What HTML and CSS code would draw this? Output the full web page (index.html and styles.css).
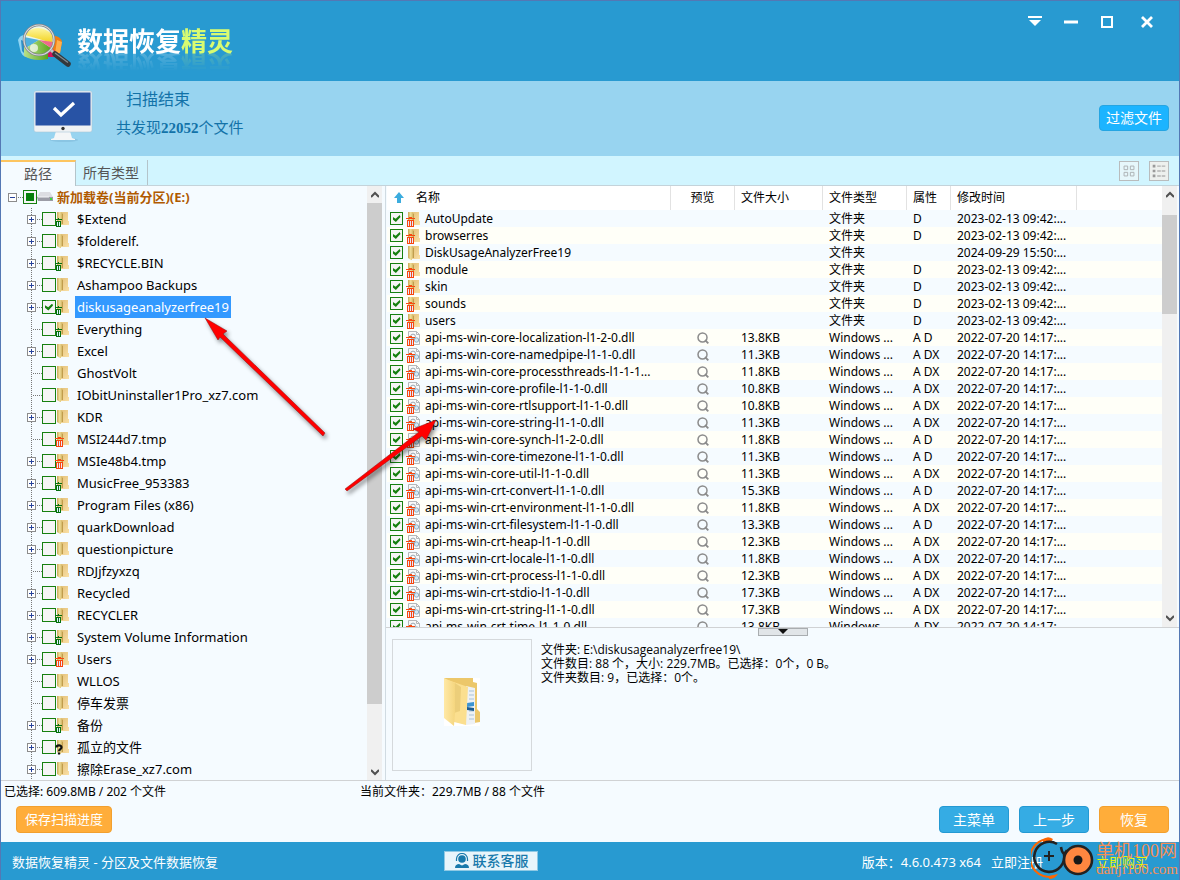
FILE: index.html
```html
<!DOCTYPE html>
<html lang="zh-CN">
<head>
<meta charset="utf-8">
<title>数据恢复精灵</title>
<link rel="stylesheet" href="styles.css">
</head>
<body>
<svg class="sprite" aria-hidden="true">
  <defs>
    <linearGradient id="gold" x1="0" x2="1" y1="0" y2="0"><stop offset="0" stop-color="#c9a85a"/><stop offset=".45" stop-color="#f1df98"/><stop offset="1" stop-color="#c4a14f"/></linearGradient>
    <linearGradient id="gold2" x1="0" x2="1" y1="0" y2="1"><stop offset="0" stop-color="#e3c078"/><stop offset="1" stop-color="#fae0a6"/></linearGradient>
  </defs>
  <symbol id="folder" viewBox="0 0 14 16">
    <path d="M4 1h8v9h1v4H4z" fill="url(#gold2)"/>
    <path d="M1 1h4l2 2v10H5v2H4l-3-2z" fill="url(#gold)"/>
    <path d="M6.500 3v10" stroke="#c09d4c" stroke-width="1"/>
  </symbol>
  <symbol id="dll" viewBox="0 0 14 16">
    <path d="M1.500 1.500h8l3 3v10h-11z" fill="#f8f9fa" stroke="#b4b7ba"/>
    <path d="M9.500 1.500v3h3" fill="none" stroke="#b4b7ba"/>
    <circle cx="6" cy="6.500" r="2.400" fill="none" stroke="#9aa7b1" stroke-width="1"/>
    <circle cx="9.500" cy="10" r="2.200" fill="#d5e8f4" stroke="#8fb0c5" stroke-width="1"/>
  </symbol>
  <symbol id="trash" viewBox="0 0 10 12">
    <g shape-rendering="crispEdges">
      <path d="M3 2h3v1h3v1H0V3h3zM1 5h7v7H1z" fill="currentColor"/>
      <path d="M2 6h1v5H2zM4 6h1v5H4zM6 6h1v5H6z" fill="#e4e8ff"/>
    </g>
  </symbol>
  <symbol id="trash-small" viewBox="0 0 10 12">
    <g shape-rendering="crispEdges">
      <path d="M3 3h1v1h3v1H0V4h3zM1 6h5v6H1z" fill="currentColor"/>
      <path d="M2 7h1v4H2zM4 7h1v4H4z" fill="#dcf4ff"/>
    </g>
  </symbol>
  <symbol id="question" viewBox="0 0 10 12">
    <path d="M1.500 4.500C1.500 1.800 6.500 1.800 6.500 4.300C6.500 6.200 4 6 4 8.300M4 9.500v2" fill="none" stroke="#111" stroke-width="2.200"/>
  </symbol>
  <symbol id="lens" viewBox="0 0 12 12">
    <circle cx="5.500" cy="5.500" r="4.500" fill="none" stroke="#8b8b8b" stroke-width="1.500"/>
    <path d="M8 8l3.300 3.300" stroke="#8b8b8b" stroke-width="1.800"/>
  </symbol>
</svg>

<div class="window">
  <header class="titlebar">
    <svg class="logo" viewBox="0 0 56 46" aria-hidden="true">
      <defs>
        <linearGradient id="gy" x1="0" x2="0" y1="0" y2="1"><stop offset="0" stop-color="#fdf6a0"/><stop offset="1" stop-color="#f2d21b"/></linearGradient>
        <linearGradient id="gg" x1="0" x2="1"><stop offset="0" stop-color="#b9e08a"/><stop offset="1" stop-color="#58a51b"/></linearGradient>
      </defs>
      <path d="M1 17Q3 11 12 12L10 34Q4 33 3 26Z" fill="#8fd4f2"/>
      <path d="M4 17l5 2v13l-4-4z" fill="#2d8fc6"/>
      <path d="M30 12Q44 12 45 19L43 30L30 33Z" fill="#f07d13"/>
      <path d="M40 17l5 2-2 11-5 1z" fill="#ffb04b"/>
      <path d="M28 21L41 30L39 34H30Z" fill="#d4145a"/>
      <path d="M7 21Q16 29 31 24V36Q17 39 7 33Z" fill="url(#gg)"/>
      <circle cx="22" cy="17" r="15" fill="#edf6e6"/>
      <path d="M9 10Q22-1 36 12L35 20L22 16L8 12Z" fill="url(#gy)"/>
      <path d="M7 14L22 17L9 25Z" fill="#4eb0de"/>
      <path d="M9 25L22 17L34 25Q28 33 20 32Q12 31 9 25Z" fill="url(#gg)"/>
      <path d="M22 17L36 19L34 25Z" fill="#ee6a8b"/>
      <circle cx="17" cy="25" r="4" fill="#fff" opacity=".7"/>
      <circle cx="22" cy="17" r="15" fill="none" stroke="#7d8288" stroke-width="2.600"/>
      <circle cx="22" cy="17" r="15" fill="none" stroke="#d9dcde" stroke-width="1.200"/>
      <path d="M34 27L38 31" stroke="#bfc3c6" stroke-width="3"/>
      <path d="M38 31L51 41" stroke="#33383c" stroke-width="5.500" stroke-linecap="round"/>
      <path d="M38 30L51 39.500" stroke="#858b90" stroke-width="1.200"/>
    </svg>
    <h1 class="brand">数据恢复<span class="brand-accent">精灵</span></h1>
    <div class="window-buttons">
      <button class="win-btn" aria-label="菜单"><svg viewBox="0 0 16 16"><path d="M1 3h14" stroke="#fff" stroke-width="2"/><path d="M2 6h12l-6 6z" fill="#fff"/></svg></button>
      <button class="win-btn" aria-label="最小化"><svg viewBox="0 0 16 16"><path d="M1 8h14" stroke="#fff" stroke-width="3"/></svg></button>
      <button class="win-btn" aria-label="最大化"><svg viewBox="0 0 16 16"><path d="M3 3h10v10H3z" fill="none" stroke="#fff" stroke-width="2"/></svg></button>
      <button class="win-btn" aria-label="关闭"><svg viewBox="0 0 16 16"><path d="M3 3l10 10M13 3L3 13" stroke="#fff" stroke-width="2.800"/></svg></button>
    </div>
  </header>

  <section class="status">
    <svg class="monitor" viewBox="0 0 60 54" aria-hidden="true">
      <ellipse cx="31" cy="50" rx="14" ry="2" fill="#6fa9cb" opacity=".35"/>
      <path d="M23 41h14l2 7 3 1v1H18v-1l3-1z" fill="#f4f6f7"/>
      <rect x="1" y="1" width="58" height="41" rx="2" fill="#f0f2f4" stroke="#a9c6d8" stroke-width=".6"/>
      <rect x="2.500" y="2.500" width="55" height="33" fill="#2853a5"/>
      <circle cx="30" cy="38.500" r="1.700" fill="#333"/>
      <path d="M21 18l7 7 13-12" fill="none" stroke="#fff" stroke-width="3.200"/>
    </svg>
    <div class="status-text">
      <p class="status-title">扫描结束</p>
      <p class="status-detail">共发现<b>22052</b>个文件</p>
    </div>
    <button class="btn btn-filter">过滤文件</button>
  </section>

  <nav class="tabs">
    <button class="tab tab-active">路径</button>
    <button class="tab">所有类型</button>
    <div class="views">
      <button class="view-btn" aria-label="图标视图"><svg viewBox="0 0 20 20"><path d="M4.500 4.500h4v4h-4zM11.500 4.500h4v4h-4zM4.500 11.500h4v4h-4zM11.500 11.500h4v4h-4z" fill="none" stroke="#a9aeb0"/></svg></button>
      <button class="view-btn view-on" aria-label="列表视图"><svg viewBox="0 0 20 20"><path d="M3 3h3v3H3zM3 8.500h3v3H3zM3 14h3v3H3z" fill="#9a9a9a"/><path d="M8 4.500h9M8 10h9M8 15.500h9" stroke="#b2b2b2" stroke-width="1.500" stroke-dasharray="4 1"/></svg></button>
    </div>
  </nav>

  <main class="main">
    <aside class="tree-pane">
      <div class="tree">
        <div class="tree-root">
          <button class="toggle toggle-open" aria-label="折叠"></button>
          <span class="dots"></span>
          <input type="checkbox" class="check check-partial" id="root">
          <svg class="drive" viewBox="0 0 16 12" aria-hidden="true"><path d="M3 1h10l3 5H0z" fill="#dcdde2"/><path d="M0 6h16v4H1z" fill="#9b9ca6"/><path d="M1 6h11" stroke="#f5f5f8"/><path d="M13 7h2v2h-2z" fill="#3ddc3d"/></svg>
          <label for="root">新加载卷(当前分区)(E:)</label>
        </div>
        <ul class="tree-list" id="tree"></ul>
      </div>
      <div class="scroll">
        <button class="scroll-btn" aria-label="向上滚动"><svg viewBox="0 0 8 8"><path d="M0 6l4-4 4 4" fill="none" stroke="#505050" stroke-width="2"/></svg></button>
        <div class="thumb thumb-tree"></div>
        <div class="scroll-space"></div>
        <button class="scroll-btn" aria-label="向下滚动"><svg viewBox="0 0 8 8"><path d="M0 2l4 4 4-4" fill="none" stroke="#505050" stroke-width="2"/></svg></button>
      </div>
    </aside>

    <section class="content">
      <div class="list-pane">
        <div class="list">
          <table class="files">
            <colgroup><col class="c-name"><col class="c-view"><col class="c-size"><col class="c-type"><col class="c-attr"><col class="c-date"><col></colgroup>
            <thead>
              <tr>
                <th class="th-name"><svg class="sort" viewBox="0 0 12 12" aria-hidden="true"><path d="M6 0l5 6H8v5H4V6H1z" fill="#3cacde"/></svg>名称</th>
                <th class="th-view">预览</th><th>文件大小</th><th>文件类型</th><th>属性</th><th>修改时间</th><th></th>
              </tr>
            </thead>
            <tbody id="files"></tbody>
          </table>
        </div>
        <div class="scroll">
          <button class="scroll-btn" aria-label="向上滚动"><svg viewBox="0 0 8 8"><path d="M0 6l4-4 4 4" fill="none" stroke="#505050" stroke-width="2"/></svg></button>
          <div class="scroll-lead"></div>
          <div class="thumb thumb-list"></div>
          <div class="scroll-space"></div>
          <button class="scroll-btn" aria-label="向下滚动"><svg viewBox="0 0 8 8"><path d="M0 2l4 4 4-4" fill="none" stroke="#505050" stroke-width="2"/></svg></button>
        </div>
      </div>
      <button class="splitter" aria-label="收起预览"><svg viewBox="0 0 10 5"><path d="M0 0h10L5 5z" fill="#111"/></svg></button>
      <div class="preview">
        <div class="thumbnail">
          <svg class="big-folder" viewBox="0 0 36 48" aria-hidden="true">
            <defs><linearGradient id="bf" x1="0" x2="1"><stop offset="0" stop-color="#ffe9a6"/><stop offset="1" stop-color="#f5d67f"/></linearGradient></defs>
            <path d="M0 0h36v48H0z" fill="#fff"/>
            <path d="M0 0h29v4l4 1v26l3 3v10l-6 1z" fill="#ecc76a"/>
            <path d="M22 8l9 2v36l-9 1z" fill="#eef1f4"/>
            <path d="M25 13h5M25 17h5M25 21h5M25 33h5M25 37h5M25 41h5" stroke="#a9c3d8"/>
            <path d="M23 25l7-1v4l-7 1z" fill="#3d94d1"/><path d="M23 29l7 1v3l-7-1z" fill="#1c5c91"/>
            <path d="M4 2l20 7-2 38-12-3z" fill="#fbdf8f"/>
            <path d="M11 5l6 4-1 24-6 2z" fill="#ecce7a"/>
            <path d="M0 0l11 5v29l-1 14L0 40z" fill="url(#bf)"/>
          </svg>
        </div>
        <div class="preview-text">
          <p>文件夹: E:\diskusageanalyzerfree19\</p>
          <p>文件数目: 88 个，大小: 229.7MB。已选择：0个，0 B。</p>
          <p>文件夹数目: 9，已选择：0个。</p>
        </div>
      </div>
    </section>

    <svg class="pointers" viewBox="0 0 240 190" aria-hidden="true">
      <g fill="#f00" stroke="#8a1010" stroke-width=".5">
        <path d="M4 8L26 21L22 24L124 123L122 126L19 27L17 30Z"/>
        <path d="M235 110L225 130L221 126L146 181L144 179L218 122L212 119Z"/>
      </g>
    </svg>
  </main>

  <section class="actions">
    <div class="summary"><span class="summary-left">已选择: 609.8MB / 202 个文件</span><span>当前文件夹：229.7MB / 88 个文件</span></div>
    <div class="buttons">
      <button class="btn btn-save">保存扫描进度</button>
      <span class="spacer"></span>
      <button class="btn btn-blue">主菜单</button>
      <button class="btn btn-blue">上一步</button>
      <button class="btn btn-orange">恢复</button>
    </div>
  </section>

  <footer class="footer">
    <span class="product">数据恢复精灵 - 分区及文件数据恢复</span>
    <button class="service"><svg viewBox="0 0 16 16" aria-hidden="true"><path d="M2.500 8V6a5.500 5.500 0 0 1 11 0v2" fill="none" stroke="#1879ab" stroke-width="1.200"/><circle cx="8" cy="6" r="3.800" fill="#1879ab"/><path d="M1 15c0-3 2-4 4-4l3 1.500L11 11c2 0 4 1 4 4z" fill="#1879ab"/></svg>联系客服</button>
    <div class="footer-right">
      <span>版本：4.6.0.473 x64</span>
      <a class="register" href="#register">立即注册</a>
      <a class="buy" href="#buy">立即购买</a>
    </div>
    <div class="mark">
      <svg viewBox="0 0 64 44" aria-hidden="true">
        <path d="M20 3A19 19 0 1 0 24 40" fill="none" stroke="#f60" stroke-width="2"/>
        <path d="M12 4Q16-1 22 3L20 6H12zM18 40l9-2Q24 43 18 43z" fill="#f60"/>
        <path d="M26 8A15 15 0 1 0 33 18" fill="none" stroke="#222" stroke-width="2.600"/>
        <path d="M18 15v10M13 20h10" stroke="#222" stroke-width="2"/>
        <path d="M30 11Q32 22 36 14" fill="none" stroke="#222" stroke-width="2.600"/>
        <circle cx="47" cy="24" r="14" fill="#ff8740" stroke="#222" stroke-width="2.600"/>
        <circle cx="47" cy="24" r="4.500" fill="#181818"/>
      </svg>
      <div class="mark-text"><span class="mark-name">单机100网</span><span class="mark-site">danji100.com</span></div>
    </div>
  </footer>
</div>
<script src="app.js"></script>
</body>
</html>
```
FILE: styles.css
```css
* { box-sizing: border-box; }
body { margin: 0; font-family: "Noto Sans", "Noto Sans CJK SC", sans-serif; font-size: 13px; color: #000; }
button { font: inherit; padding: 0; margin: 0; border: 0; background: none; color: inherit; cursor: pointer; }
p, h1, ul { margin: 0; padding: 0; }
svg { display: block; }
.sprite { position: absolute; width: 0; height: 0; }

.window { display: flex; flex-direction: column; height: 100vh; min-height: 560px; border: 1px solid #5478b4; border-bottom-width: 0; background: #f5fbff; overflow: hidden; }

.titlebar { display: flex; align-items: flex-start; flex: none; height: 80px; padding: 22px 24px 0 16px; background: #289ad1; }
.logo { width: 56px; height: 46px; margin-right: 4px; }
.brand { font-family: "Noto Sans CJK SC", sans-serif; font-size: 26px; line-height: 34px; font-weight: 700; color: #fff; -webkit-box-reflect: below -8px linear-gradient(transparent 35%, rgba(255, 255, 255, .25)); }
.brand-accent { color: #d8fb71; }
.window-buttons { display: flex; gap: 20px; margin-left: auto; margin-top: -9px; }
.win-btn svg { width: 16px; height: 16px; }
.win-btn:last-child { margin-left: 4px; }

.status { display: flex; align-items: flex-start; flex: none; height: 75px; padding: 9px 10px 0 32px; background: #98d4f0; }
.monitor { width: 60px; height: 54px; }
.status-text { margin-left: 23px; color: #1272a8; font-family: "Liberation Serif", "Noto Sans CJK SC", serif; }
.status-title { padding-left: 10px; font-size: 16px; line-height: 20px; }
.status-detail { margin-top: 8px; font-size: 15px; line-height: 20px; }
.btn { border: 1px solid; border-radius: 4px; color: #fff; text-align: center; }
.btn-filter { width: 70px; height: 26px; margin: 15px 0 0 auto; background: #1cb4ff; border-color: #25a5e2; font-size: 14px; line-height: 24px; }

.tabs { display: flex; align-items: flex-end; flex: none; height: 30px; padding-right: 10px; background: #d1f5ff; border-bottom: 1px solid #c4d3da; }
.tab { height: 25px; padding: 0 8px 0 7px; border-right: 1px solid #b4c4ca; font-size: 14px; line-height: 26px; color: #555; }
.tab-active { height: 26px; width: 75px; padding: 0; margin-bottom: -1px; background: #f5fbff; border-top: 2px solid #fdc560; line-height: 24px; }
.views { display: flex; gap: 10px; margin-left: auto; padding-bottom: 4px; }
.view-btn { width: 20px; height: 20px; border: 1px solid #b9bcbd; background: #e6f7fb; }
.view-on { background: #edf0ee; }

.main { position: relative; display: grid; grid-template-columns: 385px minmax(0, 1fr); flex: 1; min-height: 0; border-bottom: 1px solid #d0d2d4; }
.tree-pane { display: flex; min-height: 0; padding-right: 3px; border-right: 1px solid #d0dbe2; }
.tree { flex: 1; min-width: 0; overflow: hidden; }
.tree-root { display: flex; align-items: center; height: 22px; padding-left: 7px; font-weight: 700; color: #b05a00; line-height: 20px; white-space: nowrap; }
.tree-list { list-style: none; }
.node { display: flex; align-items: center; height: 22px; padding-left: 26px; white-space: nowrap; background: repeating-linear-gradient(#777 0 1px, transparent 1px 2px) 30px 0 / 1px 22px no-repeat; }
.toggle { flex: none; width: 9px; height: 9px; border: 1px solid #8c8c8c; background: linear-gradient(#27439b, #27439b) center / 5px 1px no-repeat, linear-gradient(#27439b, #27439b) center / 1px 5px no-repeat, #fff; }
.toggle-open { background: linear-gradient(#27439b, #27439b) center / 5px 1px no-repeat, #fff; }
.no-toggle { flex: none; width: 9px; }
.dots { flex: none; width: 6px; height: 1px; background: repeating-linear-gradient(90deg, transparent 0 1px, #777 1px 2px); }
.no-toggle + .dots { width: 10px; margin-left: -4px; }
.check { appearance: none; display: grid; place-items: center; flex: none; width: 14px; height: 14px; margin: 0; border: 1px solid #16800f; background: #f5f5f5; }
.check:checked::before { content: ""; width: 8px; height: 7px; background: #16800f; clip-path: polygon(0 25%, 40% 55%, 90% 0, 100% 30%, 42% 100%, 0 60%); }
.check-partial::before { content: ""; width: 8px; height: 8px; background: #07800a; }
.drive { width: 16px; height: 12px; margin-right: 4px; }
.pic { position: relative; flex: none; width: 14px; height: 16px; }
.pic > svg { width: 14px; height: 16px; }
.pic > .badge { position: absolute; left: -1px; bottom: 0; width: 10px; height: 12px; }
.red { color: #f8480f; }
.green { color: #067010; }
.node .pic { margin-right: 5px; }
.node label { padding: 0 2px; line-height: 22px; }
.node .selected { background: #3399ff; color: #fff; }

.scroll { display: flex; flex-direction: column; flex: none; width: 15px; background: #f0f0f0; }
.scroll-btn { display: grid; place-items: center; flex: none; width: 15px; height: 17px; }
.scroll-btn svg { width: 8px; height: 8px; }
.thumb { background: #cdcdcd; }
.thumb-tree { flex: 501; }
.thumb-tree + .scroll-space { flex: 59; }
.scroll-lead { flex: 12; }
.thumb-list { flex: 99; }
.thumb-list + .scroll-space { flex: 295; }

.content { display: flex; flex-direction: column; min-width: 0; min-height: 0; }
.list-pane { display: flex; flex: 440; min-height: 0; padding: 0 2px 0 1px; border-bottom: 1px solid #d0d2d4; }
.list { flex: 1; min-width: 0; overflow: hidden; }
.files { width: 100%; table-layout: fixed; border-collapse: separate; border-spacing: 0; font-size: 12px; }
.c-name { width: 284px; }
.c-view { width: 64px; }
.c-size { width: 88px; }
.c-type { width: 84px; }
.c-attr { width: 44px; }
.c-date { width: 126px; }
.files th { height: 24px; padding: 0 0 0 6px; border-right: 1px solid #e2e2e2; background: #fff; font-weight: 400; text-align: left; line-height: 22px; white-space: nowrap; }
.files th:last-child { border-right: 0; }
.files .th-view { padding: 0; text-align: center; }
.sort { display: inline-block; width: 12px; height: 12px; margin-right: 11px; vertical-align: -2px; }
.files td { height: 17px; padding: 0 0 0 6px; line-height: 17px; white-space: nowrap; overflow: hidden; }
.files tbody tr:nth-child(even) { background: #fffff8; }
.files .td-name { padding-left: 3px; }
.td-name .cell { display: flex; align-items: center; height: 17px; }
.td-name .check { width: 13px; height: 13px; margin-right: 4px; }
.td-name .pic { margin-right: 4px; }
.files .td-view { padding: 0; }
.lens { width: 12px; height: 12px; margin: 0 auto; }

.splitter { display: grid; justify-content: center; align-content: center; flex: none; align-self: center; width: 50px; height: 8px; border: 1px solid #a9adb0; background: #e1e5e8; }
.splitter svg { width: 10px; height: 5px; }
.preview { display: flex; flex: 132; min-height: 0; padding: 3px 6px 9px; }
.thumbnail { display: grid; place-items: center; flex: none; width: 140px; border: 1px solid #d5d9dc; }
.big-folder { width: 36px; height: 48px; margin-bottom: 6px; }
.preview-text { padding: 4px 0 0 9px; font-family: "Open Sans", "Noto Sans CJK SC", sans-serif; font-size: 12px; line-height: 14px; }
.pointers { position: absolute; left: 200px; top: 124px; width: 240px; height: 190px; filter: drop-shadow(2px 3px 2px rgba(0, 0, 0, .45)); pointer-events: none; }

.actions { flex: none; padding: 0 10px 9px 3px; }
.summary { display: flex; font-size: 12px; line-height: 22px; }
.summary-left { width: 356px; }
.buttons { display: flex; gap: 10px; padding: 3px 0 0 12px; }
.spacer { flex: 1; }
.buttons .btn { width: 70px; height: 27px; line-height: 25px; font-size: 14px; }
.btn-blue { background: #35ace4; border-color: #2499d2; }
.btn-orange, .btn-save { background: #ffad3a; border-color: #f2a02f; }
.buttons .btn-save { width: 96px; font-size: 13px; }

.footer { position: relative; display: flex; align-items: center; flex: none; height: 38px; padding: 0 31px 0 11px; background: #289ad1; color: #fff; }
.product { width: 432px; }
.service { display: flex; align-items: center; justify-content: center; gap: 3px; width: 94px; height: 20px; border: 1px solid #8fc9e4; background: #e8f5fb; color: #1879ab; font-size: 14px; font-weight: 500; line-height: 18px; }
.service svg { width: 16px; height: 16px; }
.footer-right { display: flex; margin-left: auto; }
.footer a { color: inherit; text-decoration: none; }
.register { margin-left: 10px; }
.footer .buy { margin-left: 53px; color: #e9f50c; }
.mark { position: absolute; right: 1px; bottom: 0; display: flex; gap: 1px; color: #f68f54; pointer-events: none; }
.mark svg { width: 64px; height: 44px; }
.mark-text { display: flex; flex-direction: column; padding-top: 5px; font-family: "Liberation Serif", "Noto Sans CJK SC", serif; }
.mark-name { font-size: 18px; line-height: 20px; }
.mark-site { font-size: 15px; line-height: 16px; }
```
FILE: app.js
```js
// name, expandable, badge, state
const nodes = [
  ["$Extend", 1, "green"], ["$folderelf.", 1], ["$RECYCLE.BIN", 1, "green"], ["Ashampoo Backups", 1],
  ["diskusageanalyzerfree19", 1, "green", "selected"], ["Everything", 0, "green"], ["Excel", 1],
  ["GhostVolt", 0], ["IObitUninstaller1Pro_xz7.com", 0], ["KDR", 1], ["MSI244d7.tmp", 0, "red"],
  ["MSIe48b4.tmp", 1, "red"], ["MusicFree_953383", 1, "green"], ["Program Files (x86)", 1, "green"],
  ["quarkDownload", 1], ["questionpicture", 1], ["RDJjfzyxzq", 0], ["Recycled", 1],
  ["RECYCLER", 1, "green"], ["System Volume Information", 1, "green"], ["Users", 1, "red"],
  ["WLLOS", 0], ["停车发票", 0], ["备份", 1, "green"], ["孤立的文件", 1, "question"], ["擦除Erase_xz7.com", 1]
];
const symbols = { green: "trash-small", red: "trash", question: "question" };
const picture = (base, badge) =>
  `<span class="pic"><svg><use href="#${base}"/></svg>${badge ? `<svg class="badge ${badge}"><use href="#${symbols[badge]}"/></svg>` : ""}</span>`;

document.getElementById("tree").innerHTML = nodes.map(([name, open, badge, state], i) => `
  <li class="node">${open ? '<button class="toggle" aria-label="展开"></button>' : '<span class="no-toggle"></span>'}<span class="dots"></span><input type="checkbox" class="check" id="n${i}"${state ? " checked" : ""}>${picture("folder", badge)}<label for="n${i}" class="${state || ""}">${name}</label></li>`).join("");

const D = "2023-02-13 09:42:...";
const files = [
  ["AutoUpdate", "", "D", D], ["browserres", "", "D", D],
  ["DiskUsageAnalyzerFree19", "", "", "2024-09-29 15:50:..."],
  ["module", "", "D", D], ["skin", "", "D", D], ["sounds", "", "D", D], ["users", "", "D", D],
  ["core-localization-l1-2-0.dll", "13.8KB", "A D"], ["core-namedpipe-l1-1-0.dll", "11.3KB", "A DX"],
  ["core-processthreads-l1-1-1...", "11.8KB", "A DX"], ["core-profile-l1-1-0.dll", "10.8KB", "A DX"],
  ["core-rtlsupport-l1-1-0.dll", "10.8KB", "A DX"], ["core-string-l1-1-0.dll", "11.3KB", "A DX"],
  ["core-synch-l1-2-0.dll", "11.8KB", "A D"], ["core-timezone-l1-1-0.dll", "11.3KB", "A D"],
  ["core-util-l1-1-0.dll", "11.3KB", "A DX"], ["crt-convert-l1-1-0.dll", "15.3KB", "A D"],
  ["crt-environment-l1-1-0.dll", "11.8KB", "A DX"], ["crt-filesystem-l1-1-0.dll", "13.3KB", "A D"],
  ["crt-heap-l1-1-0.dll", "12.3KB", "A DX"], ["crt-locale-l1-1-0.dll", "11.8KB", "A DX"],
  ["crt-process-l1-1-0.dll", "12.3KB", "A DX"], ["crt-stdio-l1-1-0.dll", "17.3KB", "A DX"],
  ["crt-string-l1-1-0.dll", "17.3KB", "A DX"], ["crt-time-l1-1-0.dll", "13.8KB", "A DX"]
];
document.getElementById("files").innerHTML = files.map(([name, size, attr, date], i) => {
  const full = size ? "api-ms-win-" + name : name;
  const badge = i === 2 ? "" : "red";
  return `<tr><td class="td-name"><div class="cell"><input type="checkbox" class="check" id="f${i}" checked>${picture(size ? "dll" : "folder", badge)}<label for="f${i}">${full}</label></div></td>
  <td class="td-view">${size ? '<svg class="lens"><use href="#lens"/></svg>' : ""}</td><td>${size}</td><td>${size ? "Windows ..." : "文件夹"}</td><td>${attr}</td><td>${date || "2022-07-20 14:17:..."}</td><td></td></tr>`;
}).join("");
```
